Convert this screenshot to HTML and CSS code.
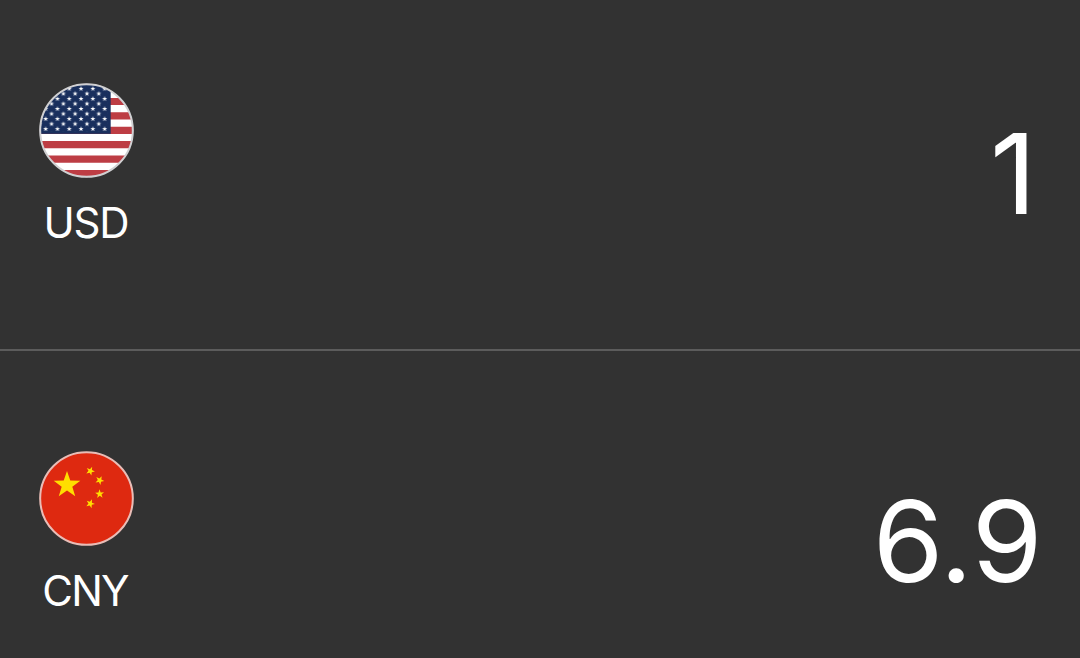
FILE: index.html
```html
<!DOCTYPE html>
<html lang="en">
<head>
<meta charset="utf-8">
<title>Currency converter</title>
<link rel="stylesheet" href="styles.css">
</head>
<body>
<main class="converter">
  <section class="row">
    <div class="currency">
      <svg class="flag" viewBox="9 9 285 285">
        <defs>
          <clipPath id="disc"><circle cx="151.5" cy="151.5" r="140"/></clipPath>
          <polygon id="star" points="0,-10 2.35,-3.24 9.51,-3.09 3.8,1.24 5.88,8.09 0,4 -5.88,8.09 -3.8,1.24 -9.51,-3.09 -2.35,-3.24"/>
          <pattern id="stars" x="20.15" y="139" width="35.4" height="30.2" patternUnits="userSpaceOnUse">
            <use href="#star" transform="translate(8.85 8) scale(.8)" fill="#fff"/>
            <use href="#star" transform="translate(26.55 23.1) scale(.8)" fill="#fff"/>
          </pattern>
        </defs>
        <g clip-path="url(#disc)">
          <rect width="300" height="300" fill="#fff"/>
          <path d="M0 21H300M0 64.5H300M0 107.8H300M0 151H300M0 194H300M0 237.3H300M0 280.5H300" stroke="#bd3d44" stroke-width="21.6"/>
          <rect width="224" height="161.5" fill="#192f5d"/>
          <rect x="10" y="18" width="205" height="136" fill="url(#stars)"/>
        </g>
        <circle cx="151.5" cy="151.5" r="139" fill="none" stroke="#d0d0d2" stroke-width="6"/>
      </svg>
      <span class="code code-usd">USD</span>
    </div>
    <div class="amount amount-base">1</div>
  </section>
  <section class="row">
    <div class="currency">
      <svg class="flag" viewBox="9 9 285 285">
        <circle cx="151.5" cy="151.5" r="139" fill="#de2910" stroke="#e9bdb7" stroke-width="6"/>
        <g fill="#ffde00">
          <use href="#star" transform="translate(93 111) scale(4.2)"/>
          <use href="#star" transform="translate(163 69) rotate(23) scale(1.4)"/>
          <use href="#star" transform="translate(191 97) rotate(-46) scale(1.4)"/>
          <use href="#star" transform="translate(191 138) rotate(-3) scale(1.4)"/>
          <use href="#star" transform="translate(163 167) rotate(21) scale(1.4)"/>
        </g>
      </svg>
      <span class="code code-cny">CNY</span>
    </div>
    <div class="amount">6.9</div>
  </section>
</main>
</body>
</html>
```
FILE: styles.css
```css
body {
  margin: 0;
  background: #323232;
  color: #fff;
  font-family: Inter, "Liberation Sans", sans-serif;
}
.converter {
  height: 658px;
  overflow: hidden;
}
.row {
  box-sizing: border-box;
  height: 351px;
  padding: 83px 37px 0 39px;
  display: flex;
  justify-content: space-between;
  align-items: flex-start;
  border-bottom: 2px solid #5c5c5c;
}
.row + .row {
  padding-top: 100px;
  border-bottom: 0;
}
.currency {
  width: 95px;
  display: flex;
  flex-direction: column;
  align-items: center;
}
.flag {
  display: block;
  width: 95px;
  height: 95px;
}
.code {
  margin-top: 20px;
  font-size: 42px;
  line-height: 50px;
}
.code-usd {
  margin-right: 1px;
  letter-spacing: -1.2px;
}
.code-cny {
  margin-right: 3px;
  letter-spacing: -1.8px;
}
.amount {
  margin-top: 23px;
  font-size: 112px;
  line-height: 134px;
  transform: scaleX(1.02);
  transform-origin: right;
}
.amount-base {
  margin-right: 6px;
}
```
